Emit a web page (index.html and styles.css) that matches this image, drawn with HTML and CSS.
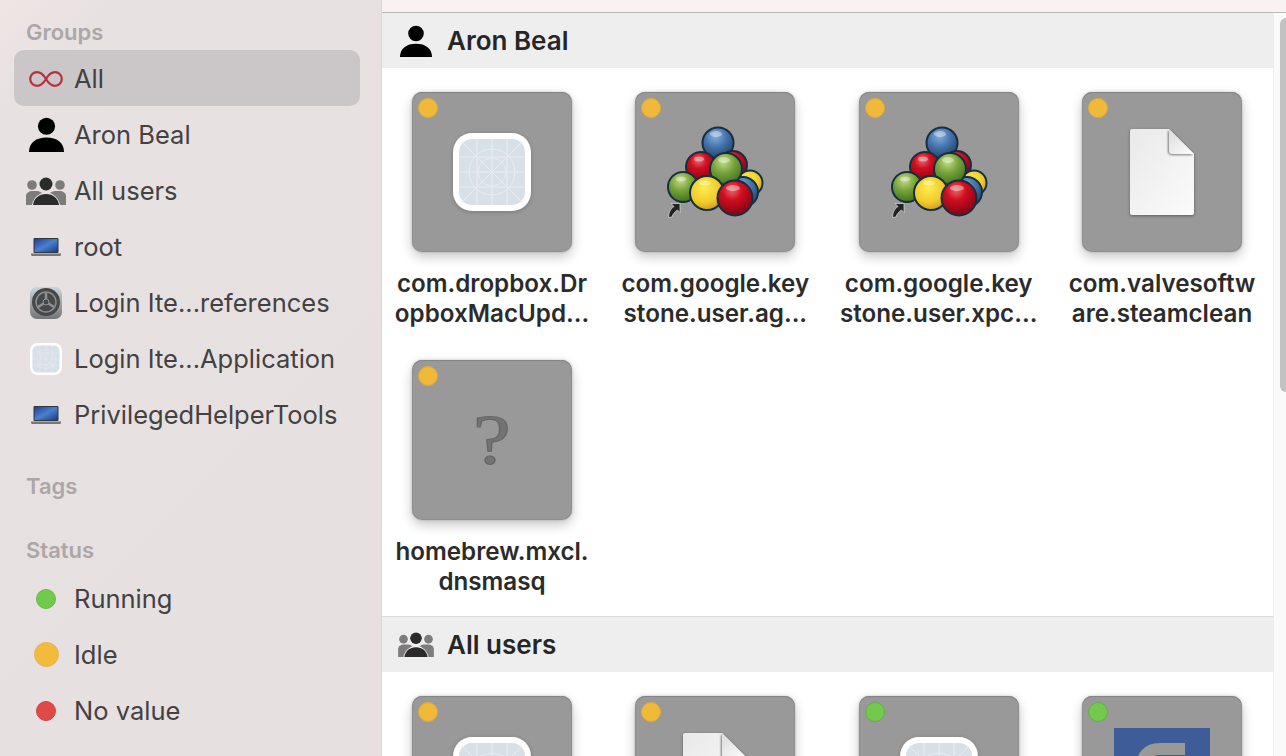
FILE: index.html
```html
<!DOCTYPE html>
<html lang="en">
<head>
<meta charset="utf-8">
<title>Login Items</title>
<link rel="stylesheet" href="styles.css">
</head>
<body>
<svg class="sprite" aria-hidden="true">
  <defs>
    <radialGradient id="gBlue" cx=".42" cy=".28" r=".8"><stop offset="0" stop-color="#86aedb"/><stop offset=".45" stop-color="#4573ab"/><stop offset="1" stop-color="#22395a"/></radialGradient>
    <radialGradient id="gRed" cx=".42" cy=".28" r=".8"><stop offset="0" stop-color="#e26a70"/><stop offset=".35" stop-color="#d20d1e"/><stop offset="1" stop-color="#6e0416"/></radialGradient>
    <radialGradient id="gGreen" cx=".42" cy=".28" r=".8"><stop offset="0" stop-color="#c4da85"/><stop offset=".45" stop-color="#74a238"/><stop offset="1" stop-color="#3a6420"/></radialGradient>
    <radialGradient id="gYellow" cx=".42" cy=".35" r=".8"><stop offset="0" stop-color="#fbee50"/><stop offset=".55" stop-color="#f2c92a"/><stop offset="1" stop-color="#b58318"/></radialGradient>
    <linearGradient id="gScreen" x1="0" y1="0" x2="1" y2="1"><stop offset="0" stop-color="#1f3f8f"/><stop offset=".5" stop-color="#4a7fd0"/><stop offset="1" stop-color="#1c3a86"/></linearGradient>
    <linearGradient id="gGear" x1="0" y1="0" x2="0" y2="1"><stop offset="0" stop-color="#c9d6de"/><stop offset=".6" stop-color="#9a9c9e"/><stop offset="1" stop-color="#727476"/></linearGradient>
    <linearGradient id="gDoc" x1="0" y1="0" x2="1" y2="1"><stop offset="0" stop-color="#e9e9e9"/><stop offset="1" stop-color="#fbfbfb"/></linearGradient>
    <linearGradient id="gFold" x1="0" y1="0" x2="1" y2="1"><stop offset="0" stop-color="#dcdcdc"/><stop offset="1" stop-color="#fdfdfd"/></linearGradient>
    <filter id="foldShadow" x="-30%" y="-30%" width="160%" height="160%"><feDropShadow dx="-1" dy="1" stdDeviation="1.300" flood-color="#000" flood-opacity=".5"/></filter>
    <symbol id="person" viewBox="0 0 34 34">
      <circle cx="17" cy="9" r="8.300"/>
      <path d="M0 34C0 25 7 20 17 20s17 5 17 14z"/>
    </symbol>
    <symbol id="group" viewBox="0 0 40 28">
      <circle cx="6" cy="8" r="4.800" fill="#7d7b7b"/>
      <circle cx="34" cy="8" r="4.800" fill="#7d7b7b"/>
      <path d="M0 28V19c0-3 3-5 7-5h4c2 0 4 1 5 2-5 2-9 6-10 12zM40 28V19c0-3-3-5-7-5h-4c-2 0-4 1-5 2 5 2 9 6 10 12z" fill="#7d7b7b"/>
      <circle cx="20" cy="7" r="6.500" fill="#2b2b2b"/>
      <path d="M7 28c1-7 6-11 13-11s12 4 13 11z" fill="#2b2b2b"/>
    </symbol>
    <symbol id="laptop" viewBox="0 0 30 20">
      <rect x="2.500" y="1" width="25" height="15" rx="1" fill="#33363b"/>
      <rect x="3.500" y="2" width="23" height="13" fill="url(#gScreen)"/>
      <path d="M0 16.500h30v1.300c0 .7-.5 1.200-1.200 1.200H1.200C.5 19 0 18.500 0 17.800z" fill="#74767a"/>
    </symbol>
    <symbol id="blueprint" viewBox="0 0 78 78">
      <rect width="78" height="78" rx="19" fill="#fff"/>
      <rect x="6" y="6" width="66" height="66" rx="13" fill="#d8e0e7"/>
      <g fill="none" stroke="#e9edf0" stroke-width="1">
        <path d="M24 6v66M39 6v66M54 6v66M6 24h66M6 39h66M9 9l60 60M69 9L9 69M6 54h66"/>
        <circle cx="39" cy="39" r="14"/>
        <circle cx="39" cy="39" r="23"/>
      </g>
    </symbol>
    <symbol id="doc" viewBox="0 0 64 86">
      <path d="M2 0H39L64 25V84a2 2 0 0 1-2 2H2a2 2 0 0 1-2-2V2A2 2 0 0 1 2 0z" fill="url(#gDoc)"/>
      <path d="M39 0L64 25H43a4 4 0 0 1-4-4z" fill="url(#gFold)" filter="url(#foldShadow)"/>
    </symbol>
    <symbol id="balls" viewBox="0 0 160 160">
      <g stroke="#14303f" stroke-width="2">
        <circle cx="83" cy="51" r="15.500" fill="url(#gBlue)"/>
        <circle cx="98" cy="73" r="14" fill="url(#gRed)"/>
        <circle cx="66" cy="75" r="15" fill="url(#gRed)"/>
        <circle cx="115" cy="91" r="12.500" fill="url(#gYellow)"/>
        <circle cx="108" cy="100" r="15" fill="url(#gBlue)"/>
        <circle cx="48" cy="95" r="15" fill="url(#gGreen)"/>
        <circle cx="91" cy="77" r="16" fill="url(#gGreen)"/>
        <circle cx="72" cy="101" r="17" fill="url(#gYellow)"/>
        <circle cx="100" cy="106" r="17.500" fill="url(#gRed)"/>
      </g>
      <g fill="#fff" opacity=".4">
        <ellipse cx="81" cy="42" rx="6" ry="3"/>
        <ellipse cx="64" cy="67" rx="5" ry="2.500"/>
        <ellipse cx="89" cy="68" rx="6" ry="3"/>
        <ellipse cx="46" cy="87" rx="5" ry="2.500"/>
        <ellipse cx="70" cy="91" rx="6" ry="2.500"/>
        <ellipse cx="98" cy="96" rx="7" ry="3"/>
      </g>
      <path d="M36 111.500H45V120.500L42.500 118C40 119.500 38 122 37 125L33.500 125.500C33.500 120.500 35.500 116.500 39 114.500z" fill="#222" stroke="#e4e4e4" stroke-width=".7"/>
    </symbol>
  </defs>
</svg>

<aside class="sidebar">
  <section class="side-group">
    <h2 class="side-title">Groups</h2>
    <ul class="side-list">
      <li class="side-row selected">
        <span class="side-icon"><svg class="i-inf" viewBox="0 0 34 16"><path d="M17 8C14 3 11 1.200 8 1.200 4 1.200 1.200 4.300 1.200 8S4 14.800 8 14.800c3 0 6-1.800 9-6.800 3-5 6-6.800 9-6.800 4 0 6.800 3.100 6.800 6.800S30 14.800 26 14.800c-3 0-6-1.800-9-6.800z"/></svg></span>
        <span>All</span>
      </li>
      <li class="side-row">
        <span class="side-icon"><svg class="i-person"><use href="#person"/></svg></span>
        <span>Aron Beal</span>
      </li>
      <li class="side-row">
        <span class="side-icon"><svg class="i-group"><use href="#group"/></svg></span>
        <span>All users</span>
      </li>
      <li class="side-row">
        <span class="side-icon"><svg class="i-laptop"><use href="#laptop"/></svg></span>
        <span>root</span>
      </li>
      <li class="side-row">
        <span class="side-icon"><svg class="i-app" viewBox="0 0 32 32">
          <rect width="32" height="32" rx="7" fill="url(#gGear)"/>
          <circle cx="16" cy="15" r="14" fill="#47484a"/>
          <circle cx="16" cy="15" r="10" fill="none" stroke="#8b8d8f" stroke-width="1.500"/>
          <path d="M16 15V6M16 15L8 20M16 15L24 20" stroke="#8f9193" stroke-width="2.500" fill="none"/>
          <circle cx="16" cy="15" r="3" fill="#47484a" stroke="#8f9193"/>
        </svg></span>
        <span>Login Ite...references</span>
      </li>
      <li class="side-row">
        <span class="side-icon"><svg class="i-app"><use href="#blueprint"/></svg></span>
        <span>Login Ite...Application</span>
      </li>
      <li class="side-row">
        <span class="side-icon"><svg class="i-laptop"><use href="#laptop"/></svg></span>
        <span>PrivilegedHelperTools</span>
      </li>
    </ul>
  </section>
  <section class="side-group tags">
    <h2 class="side-title">Tags</h2>
  </section>
  <section class="side-group status">
    <h2 class="side-title">Status</h2>
    <ul class="side-list">
      <li class="side-row"><span class="side-icon"><i class="status-dot running"></i></span><span>Running</span></li>
      <li class="side-row"><span class="side-icon"><i class="status-dot idle"></i></span><span>Idle</span></li>
      <li class="side-row"><span class="side-icon"><i class="status-dot none"></i></span><span>No value</span></li>
    </ul>
  </section>
</aside>

<main class="main">
  <div class="top-strip"></div>
  <div class="content">
    <div class="sections">
      <section class="section">
        <header class="section-head">
          <svg class="h-person"><use href="#person"/></svg>
          <h1 class="section-title">Aron Beal</h1>
        </header>
        <div class="tile-grid">
          <article class="item">
            <div class="tile"><i class="tile-dot idle"></i><svg class="t-blueprint"><use href="#blueprint"/></svg></div>
            <p class="item-name"><span>com.dropbox.Dr</span><span>opboxMacUpd...</span></p>
          </article>
          <article class="item">
            <div class="tile"><i class="tile-dot idle"></i><svg class="t-full"><use href="#balls"/></svg></div>
            <p class="item-name"><span>com.google.key</span><span>stone.user.ag...</span></p>
          </article>
          <article class="item">
            <div class="tile"><i class="tile-dot idle"></i><svg class="t-full"><use href="#balls"/></svg></div>
            <p class="item-name"><span>com.google.key</span><span>stone.user.xpc...</span></p>
          </article>
          <article class="item">
            <div class="tile"><i class="tile-dot idle"></i><svg class="t-doc"><use href="#doc"/></svg></div>
            <p class="item-name"><span>com.valvesoftw</span><span>are.steamclean</span></p>
          </article>
          <article class="item">
            <div class="tile"><i class="tile-dot idle"></i><span class="t-question">?</span></div>
            <p class="item-name"><span>homebrew.mxcl.</span><span>dnsmasq</span></p>
          </article>
        </div>
      </section>
      <section class="section second">
        <header class="section-head">
          <svg class="h-group"><use href="#group"/></svg>
          <h1 class="section-title">All users</h1>
        </header>
        <div class="tile-grid">
          <article class="item"><div class="tile"><i class="tile-dot idle"></i><svg class="t-blueprint"><use href="#blueprint"/></svg></div></article>
          <article class="item"><div class="tile"><i class="tile-dot idle"></i><svg class="t-doc"><use href="#doc"/></svg></div></article>
          <article class="item"><div class="tile"><i class="tile-dot running"></i><svg class="t-blueprint"><use href="#blueprint"/></svg></div></article>
          <article class="item"><div class="tile"><i class="tile-dot running"></i>
            <svg class="t-blue" viewBox="0 0 96 96"><rect width="96" height="96" fill="#3d5c98"/><path d="M71 21H46C33 21 28 29 28 39V96" fill="none" stroke="#999" stroke-width="12"/></svg>
          </div></article>
        </div>
      </section>
    </div>
    <div class="scrollbar"><div class="thumb"></div></div>
  </div>
</main>
</body>
</html>
```
FILE: styles.css
```css
* { box-sizing: border-box; }
html, body { margin: 0; height: 100%; }
body {
  width: 1286px;
  height: 756px;
  overflow: hidden;
  display: flex;
  font-family: Inter, "Liberation Sans", sans-serif;
  background: #fff;
}
.sprite { display: block; width: 0; height: 0; flex: none; }

.sidebar {
  width: 382px;
  flex: none;
  height: 756px;
  padding: 14px 21px 0 14px;
  background: linear-gradient(135deg, #efe5e4 0, #e7e1e2 90px, #e6e0e1 100%);
  border-right: 1px solid #dcd8d8;
  color: #434142;
}
.side-title {
  margin: 0;
  padding: 1px 0 0 12px;
  height: 36px;
  line-height: 34px;
  font-size: 22px;
  font-weight: 600;
  color: #aca6a8;
}
.side-list { list-style: none; margin: 0; padding: 0; }
.side-row {
  height: 56px;
  display: flex;
  align-items: center;
  font-size: 25.500px;
  border-radius: 10px;
}
.side-row > span:last-child { padding-top: 1px; }
.side-row.selected { background: #cbc6c8; }
.side-icon {
  width: 60px;
  flex: none;
  display: flex;
  justify-content: center;
  padding: 1px 0 0 4px;
}
.tags { margin-top: 26px; }
.status { margin-top: 28px; }
.status .side-title { margin-bottom: 2px; }

.i-inf { width: 34px; height: 16px; fill: none; stroke: #b8303f; stroke-width: 2.200; }
.i-person { width: 35px; height: 35px; fill: #000; }
.i-group { width: 40px; height: 28px; }
.i-laptop { width: 30px; height: 20px; }
.i-app { width: 32px; height: 32px; }

.status-dot { display: block; border-radius: 50%; }
.status-dot.running { width: 20px; height: 20px; background: #72c94c; border: 1px solid #68b846; }
.status-dot.idle { width: 25px; height: 25px; background: #f2bb3c; border: 1px solid #e3b458; }
.status-dot.none { width: 20px; height: 20px; background: #df4a48; border: 1px solid #cf4644; }

.main { flex: 1; min-width: 0; height: 756px; display: flex; flex-direction: column; }
.top-strip { height: 13px; flex: none; background: #f9f2f3; border-bottom: 1px solid #bdb9b9; }
.content { flex: 1; min-height: 0; display: flex; overflow: hidden; }
.sections { width: 891px; flex: none; }
.scrollbar {
  flex: 1;
  background: #fafafa;
  border-left: 1px solid #ececec;
  padding: 5px 0 0 6px;
}
.thumb { height: 374px; background: #c2c2c2; border-radius: 6px 0 0 6px; }

.section-head {
  height: 55px;
  display: flex;
  align-items: center;
  background: #eeeeee;
  padding-left: 18px;
}
.h-person { width: 32px; height: 32px; margin-right: 15px; fill: #000; }
.h-group { width: 36px; height: 25px; margin-left: -2px; margin-right: 13px; }
.section-title { margin: 0; font-size: 26px; font-weight: 600; color: #262626; }

.tile-grid {
  display: grid;
  grid-template-columns: repeat(4, 160px);
  column-gap: 63.330px;
  row-gap: 0;
  padding: 24px 0 0 30px;
}
.item { height: 268px; }
.section { border-bottom: 1px solid #dcdcdc; height: 604px; }
.section.second { border-bottom: 0; }
.tile {
  position: relative;
  width: 160px;
  height: 160px;
  display: flex;
  align-items: center;
  justify-content: center;
  background: #999;
  border-radius: 10px;
  box-shadow: inset 0 1px 0 #858585, inset 0 0 0 1px rgba(0, 0, 0, .07), 0 5px 12px rgba(0, 0, 0, .22), 0 0 3px rgba(0, 0, 0, .2);
}
.tile-dot {
  position: absolute;
  left: 6px;
  top: 6px;
  width: 20px;
  height: 20px;
  border-radius: 50%;
}
.tile-dot.idle { background: #f0b93a; border: 1px solid #dfab35; }
.tile-dot.running { background: #72c94c; border: 1px solid #62b043; }

.t-blueprint { width: 78px; height: 78px; filter: drop-shadow(0 1px 2px rgba(0,0,0,.2)); }
.t-full { width: 160px; height: 160px; }
.t-doc { width: 64px; height: 86px; filter: drop-shadow(0 1px 1.500px rgba(0,0,0,.4)); }
.t-blue { width: 96px; height: 96px; }
.t-question {
  font-family: "Liberation Serif", serif;
  font-size: 72px;
  line-height: 72px;
  color: #737373;
  -webkit-text-stroke: 1.200px #666;
  text-shadow: 0 1px 0 #a8a8a8;
  transform: scaleX(1.18);
}

.item-name {
  margin: 17px -20px 0;
  text-align: center;
  font-size: 24.200px;
  line-height: 30px;
  font-weight: 600;
  color: #2b2b2b;
}
.item-name span { display: block; white-space: nowrap; }
```
